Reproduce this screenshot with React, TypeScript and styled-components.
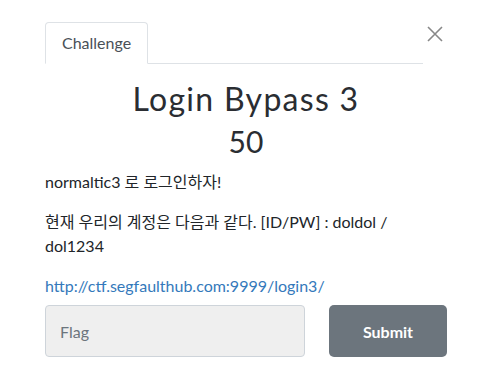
import { createGlobalStyle, styled } from "styled-components"

const GlobalStyle = createGlobalStyle`
  html, body {
    margin: 0;
    background: #fff;
  }
  body {
    font-family: Lato, "Noto Sans CJK KR", sans-serif;
    font-size: 16px;
    line-height: 1.5;
    color: #212529;
  }
`

export default function App() {
  return (
    <>
      <GlobalStyle />
      <Modal>
        <Header>
          <Tabs>
            <Tab $active>Challenge</Tab>
          </Tabs>
          <CloseButton aria-label="Close">
            <svg width="16" height="16" viewBox="0 0 16 16">
              <path d="M1 1L15 15M15 1L1 15" stroke="#888" strokeWidth="1.6" fill="none" />
            </svg>
          </CloseButton>
        </Header>

        <Title>Login Bypass 3</Title>
        <Points>50</Points>

        <Description>
          <p>normaltic3 로 로그인하자!</p>
          <p>현재 우리의 계정은 다음과 같다. [ID/PW] : doldol / dol1234</p>
          <p>
            <Link href="#">http://ctf.segfaulthub.com:9999/login3/</Link>
          </p>
        </Description>

        <SubmitRow>
          <FlagInput placeholder="Flag" />
          <SubmitButton>Submit</SubmitButton>
        </SubmitRow>
      </Modal>
    </>
  )
}

const Modal = styled.div`
  width: 402px;
  padding: 22px 0 0 45px;
`

const Header = styled.div`
  display: flex;
  align-items: stretch;
`

const Tabs = styled.div`
  flex: 1;
  display: flex;
  border-bottom: 1px solid #dee2e6;
`

const Tab = styled.div<{ $active?: boolean }>`
  margin-bottom: -1px;
  padding: 8px 16px;
  font-size: 16px;
  line-height: 24px;
  color: #495057;
  background: #fff;
  border: 1px solid ${({ $active }) => ($active ? "#dee2e6" : "transparent")};
  border-bottom-color: ${({ $active }) => ($active ? "#fff" : "transparent")};
  border-top-left-radius: 4px;
  border-top-right-radius: 4px;
`

const CloseButton = styled.button`
  width: 24px;
  padding: 4px 0 0 4px;
  border: 0;
  background: none;
  display: flex;
  align-items: flex-start;
  cursor: pointer;
`

const Title = styled.h3`
  margin: 16px 0 0;
  text-align: center;
  font-size: 32px;
  font-weight: 400;
  letter-spacing: 1.3px;
  line-height: 1.2;
  color: #2a2d32;
`

const Points = styled.h4`
  margin: 5px 0 0;
  text-align: center;
  font-size: 30px;
  font-weight: 400;
  line-height: 1.2;
  color: #2a2d32;
`

const Description = styled.div`
  margin-top: 11px;

  p {
    margin: 0 0 16px;
  }

  p:last-child {
    margin-bottom: 7px;
  }
`

const Link = styled.a`
  color: #3479bb;
  text-decoration: none;
`

const SubmitRow = styled.div`
  display: grid;
  grid-template-columns: 260px 118px;
  column-gap: 24px;
`

const FlagInput = styled.input`
  box-sizing: border-box;
  height: 52px;
  padding: 0 14px;
  font-family: Lato, sans-serif;
  font-size: 16px;
  color: #495057;
  background: #efefef;
  border: 1px solid #ced4da;
  border-radius: 4px;
  outline: none;

  &::placeholder {
    color: #6c757d;
  }
`

const SubmitButton = styled.button`
  height: 52px;
  font-family: Lato, sans-serif;
  font-size: 16px;
  font-weight: 700;
  color: #fff;
  background: #6c757d;
  border: 0;
  border-radius: 5px;
  cursor: pointer;
`
